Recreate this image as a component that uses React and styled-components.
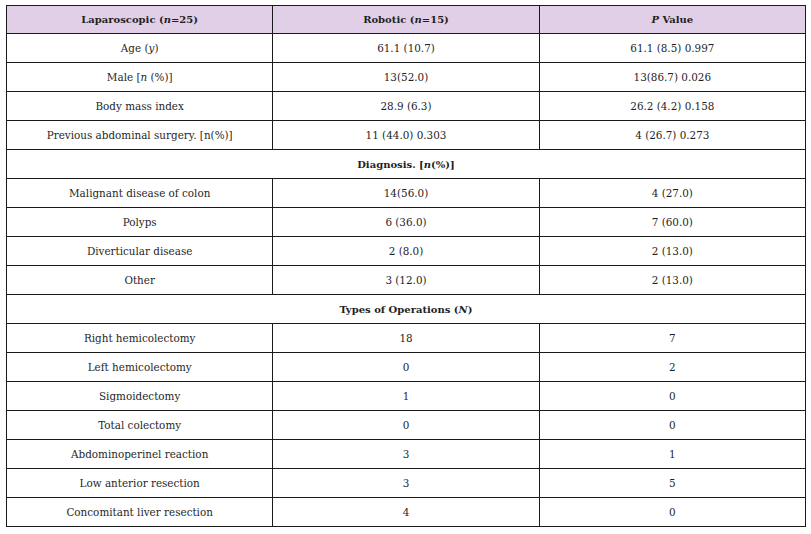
import React from 'react'
import styled, { createGlobalStyle } from 'styled-components'

const GlobalStyle = createGlobalStyle`
  html, body {
    margin: 0;
    background: #fff;
  }
  body {
    padding: 5px 6px;
    font-family: "DejaVu Serif", "Liberation Serif", serif;
    color: #1f1f1f;
  }
`

const Table = styled.table`
  width: 800px;
  border-collapse: collapse;
  table-layout: fixed;
  font-size: 10.4px;
  border: 1px solid #1a1a1a;
`

const HeadCell = styled.th`
  height: 27px;
  padding: 0 4px;
  background: #e1cfe7;
  font-size: 10px;
  font-weight: bold;
  text-align: center;
  border: 1px solid #1a1a1a;
`

const Cell = styled.td`
  height: 28px;
  padding: 0 4px;
  text-align: center;
  border: 1px solid #1a1a1a;
  font-size: ${p => (p.$bold ? '10px' : 'inherit')};
  font-weight: ${p => (p.$bold ? 'bold' : 'normal')};
`

const rows1 = [
  [<>Age (<i>y</i>)</>, '61.1 (10.7)', '61.1 (8.5) 0.997'],
  [<>Male [<i>n</i> (%)]</>, '13(52.0)', '13(86.7) 0.026'],
  ['Body mass index', '28.9 (6.3)', '26.2 (4.2) 0.158'],
  ['Previous abdominal surgery. [n(%)]', '11 (44.0) 0.303', '4 (26.7) 0.273'],
]

const rows2 = [
  ['Malignant disease of colon', '14(56.0)', '4 (27.0)'],
  ['Polyps', '6 (36.0)', '7 (60.0)'],
  ['Diverticular disease', '2 (8.0)', '2 (13.0)'],
  ['Other', '3 (12.0)', '2 (13.0)'],
]

const rows3 = [
  ['Right hemicolectomy', '18', '7'],
  ['Left hemicolectomy', '0', '2'],
  ['Sigmoidectomy', '1', '0'],
  ['Total colectomy', '0', '0'],
  ['Abdominoperinel reaction', '3', '1'],
  ['Low anterior resection', '3', '5'],
  ['Concomitant liver resection', '4', '0'],
]

const Rows = ({ data }) =>
  data.map((r, i) => (
    <tr key={i}>
      {r.map((c, j) => (
        <Cell key={j}>{c}</Cell>
      ))}
    </tr>
  ))

export default function App() {
  return (
    <>
      <GlobalStyle />
      <Table>
        <thead>
          <tr>
            <HeadCell>Laparoscopic (<i>n</i>=25)</HeadCell>
            <HeadCell>Robotic (<i>n</i>=15)</HeadCell>
            <HeadCell><i>P</i> Value</HeadCell>
          </tr>
        </thead>
        <tbody>
          <Rows data={rows1} />
          <tr>
            <Cell colSpan={3} $bold>Diagnosis. [<i>n</i>(%)]</Cell>
          </tr>
          <Rows data={rows2} />
          <tr>
            <Cell colSpan={3} $bold>Types of Operations (<i>N</i>)</Cell>
          </tr>
          <Rows data={rows3} />
        </tbody>
      </Table>
    </>
  )
}
